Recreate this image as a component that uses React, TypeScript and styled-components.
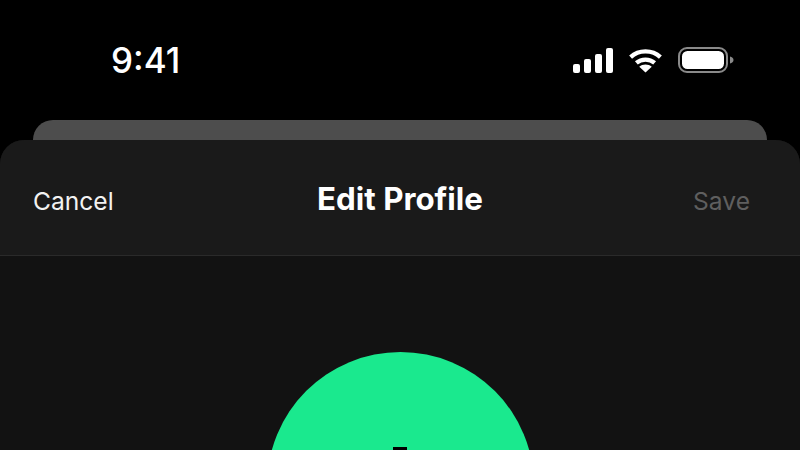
import React from 'react';
import styled, { createGlobalStyle } from 'styled-components';

const GlobalStyle = createGlobalStyle`
  html, body {
    margin: 0;
    padding: 0;
    background: #000;
  }
`;

const Screen = styled.div`
  width: 800px;
  height: 450px;
  overflow: hidden;
  display: flex;
  flex-direction: column;
  background: #000;
  font-family: Inter, "Open Sans", sans-serif;
`;

const StatusBar = styled.div`
  height: 120px;
  flex: none;
  display: flex;
  justify-content: space-between;
  align-items: flex-start;
  padding: 40px 66px 0 111px;
  box-sizing: border-box;
`;

const Clock = styled.span`
  color: #fff;
  font-size: 35px;
  line-height: 40px;
  font-weight: 500;
`;

const StatusIcons = styled.div`
  display: flex;
  align-items: center;
  gap: 15px;
  height: 40px;
`;

const BackCard = styled.div`
  height: 20px;
  flex: none;
  margin: 0 33px;
  background: #4d4d4d;
  border-radius: 20px 20px 0 0;
`;

const Sheet = styled.div`
  flex: 1;
  background: #121212;
  border-radius: 24px 24px 0 0;
  overflow: hidden;
`;

const Header = styled.div`
  height: 116px;
  box-sizing: border-box;
  display: grid;
  grid-template-columns: 1fr auto 1fr;
  align-items: center;
  padding: 3px 33px 0;
  background: #1a1a1a;
  border-bottom: 1px solid #2a2a2a;
`;

const Action = styled.span<{ $muted?: boolean }>`
  font-size: 24.6px;
  line-height: 30px;
  margin-top: 4px;
  justify-self: ${props => (props.$muted ? 'end' : 'start')};
  margin-right: ${props => (props.$muted ? '17px' : '0')};
  color: ${props => (props.$muted ? '#5f5f5f' : '#f2f2f2')};
`;

const Title = styled.span`
  font-size: 31.3px;
  line-height: 34px;
  font-weight: 700;
  color: #fff;
`;

const Body = styled.div`
  display: flex;
  justify-content: center;
  padding-top: 96px;
`;

const Avatar = styled.div`
  width: 267px;
  height: 267px;
  flex: none;
  border-radius: 50%;
  background: #1ae98e;
  display: flex;
  justify-content: center;
  padding-top: 95px;
  box-sizing: border-box;
`;

const AvatarMark = styled.div`
  width: 14px;
  height: 14px;
  background: #000;
`;

const SignalIcon = () => (
  <svg width="40" height="25" viewBox="0 0 40 25" fill="#fff">
    <rect x="0" y="16" width="7" height="9" rx="2" />
    <rect x="11" y="11" width="7" height="14" rx="2" />
    <rect x="22" y="6" width="7" height="19" rx="2" />
    <rect x="33" y="0" width="7" height="25" rx="2" />
  </svg>
);

const WifiIcon = () => (
  <svg width="35" height="25" viewBox="0 0 36 26" fill="none" stroke="#fff" strokeWidth="4.4">
    <path d="M2.500 9.500C11 1.500 25 1.500 33.500 9.500" />
    <path d="M8.500 15.500C13.800 10.800 22.200 10.800 27.500 15.500" />
    <path d="M18 25.500L11.500 19.500C15 16.300 21 16.300 24.500 19.500Z" fill="#fff" stroke="none" />
  </svg>
);

const BatteryIcon = () => (
  <svg width="56" height="26" viewBox="0 0 56 26" fill="none">
    <rect x="1" y="1" width="48" height="24" rx="8" stroke="#8a8a8a" strokeWidth="2" />
    <rect x="4" y="4" width="42" height="18" rx="5.500" fill="#fff" />
    <path d="M52 9.500C54 10 55.500 11.300 55.500 13C55.500 14.700 54 16 52 16.500Z" fill="#8a8a8a" />
  </svg>
);

export default function App() {
  return (
    <Screen>
      <GlobalStyle />
      <StatusBar>
        <Clock>9:41</Clock>
        <StatusIcons>
          <SignalIcon />
          <WifiIcon />
          <BatteryIcon />
        </StatusIcons>
      </StatusBar>
      <BackCard />
      <Sheet>
        <Header>
          <Action>Cancel</Action>
          <Title>Edit Profile</Title>
          <Action $muted>Save</Action>
        </Header>
        <Body>
          <Avatar>
            <AvatarMark />
          </Avatar>
        </Body>
      </Sheet>
    </Screen>
  );
}
